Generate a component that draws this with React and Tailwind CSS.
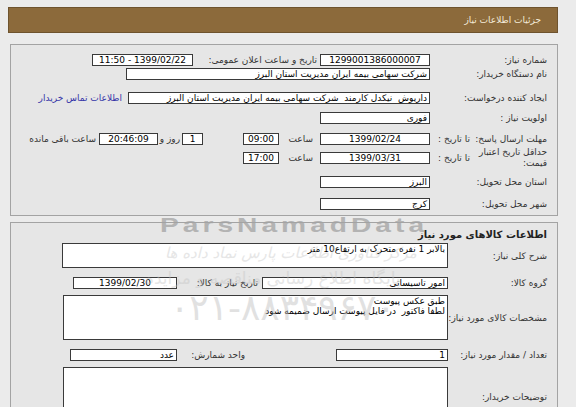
import React from "react";

const Field = ({ w, children, align = "center", className = "" }) => {
  const al = align === "center" ? "justify-center" : "justify-start";
  return (
    <div
      className={`h-[12px] shrink-0 bg-white border border-[#3a3a3a] flex items-center px-[2px] leading-[10px] text-black overflow-hidden whitespace-nowrap ${al} ${className}`}
      style={{ width: w }}
    >
      {children}
    </div>
  );
};

const Area = ({ w, h, children }) => (
  <div
    className="shrink-0 bg-white border border-[#3a3a3a] px-[2px] text-black leading-[10px] overflow-hidden"
    style={{ width: w, height: h }}
  >
    {children}
  </div>
);

export default function App() {
  return (
    <div
      dir="rtl"
      className="relative w-[576px] h-[407px] overflow-hidden bg-[#ebebeb] pt-[7px] text-[9px] leading-[12px] text-[#333]"
      style={{ fontFamily: '"DejaVu Sans", "Liberation Sans", sans-serif' }}
    >
      {/* header */}
      <div className="mr-[18px] ml-[8px] h-[26px] bg-[#8c6a3b] border border-[#6e532e] flex items-center pr-[16px] text-[#f3ead9]">
        جزئیات اطلاعات نیاز
      </div>

      {/* panel 1 */}
      <div className="mt-[11px] mr-[18px] ml-[10px] border border-[#a3a3a3] bg-[#e6e6e6] pt-[8px] pb-[4px] pr-[10px]">
        <div className="flex items-center h-[14px]">
          <div className="w-[117px] shrink-0">شماره نیاز:</div>
          <Field w={110}>1299001386000007</Field>
          <div className="w-[127px] shrink-0 pr-[3px]">تاریخ و ساعت اعلان عمومی:</div>
          <Field w={101}>1399/02/22 - 11:50</Field>
        </div>
        <div className="flex items-center h-[14px]">
          <div className="w-[117px] shrink-0">نام دستگاه خریدار:</div>
          <Field w={304} align="start">شرکت سهامی بیمه ایران مدیریت استان البرز</Field>
        </div>
        <div className="flex items-center h-[14px] mt-[10px]">
          <div className="w-[117px] shrink-0">ایجاد کننده درخواست:</div>
          <Field w={302} align="start">
            <span className="whitespace-pre">داریوش  نیکدل کارمند  شرکت سهامی بیمه ایران مدیریت استان البرز</span>
          </Field>
          <div className="mr-[6px] text-[#3535a8] whitespace-nowrap">اطلاعات تماس خریدار</div>
        </div>
        <div className="flex items-center h-[14px] mt-[6px]">
          <div className="w-[117px] shrink-0">اولویت نیاز :</div>
          <Field w={110} align="start">فوری</Field>
        </div>
        <div className="flex items-center h-[14px] mt-[7px]">
          <div className="w-[77px] shrink-0 whitespace-nowrap">مهلت ارسال پاسخ:</div>
          <div className="w-[40px] shrink-0 whitespace-nowrap">تا تاریخ :</div>
          <Field w={110}>1399/02/24</Field>
          <div className="w-[41px] shrink-0 pr-[7px]">ساعت</div>
          <Field w={36}>09:00</Field>
          <div className="w-[40px] shrink-0" />
          <Field w={21}>1</Field>
          <div className="w-[24px] shrink-0 pr-[2px] whitespace-nowrap">روز و</div>
          <Field w={59} className="bg-[#f1efc4] text-[#555]">20:46:09</Field>
          <div className="mr-[3px] whitespace-nowrap">ساعت باقی مانده</div>
        </div>
        <div className="flex items-center h-[24px]">
          <div className="w-[77px] shrink-0 leading-[11px]">حداقل تاریخ اعتبار قیمت:</div>
          <div className="w-[40px] shrink-0 whitespace-nowrap">تا تاریخ :</div>
          <Field w={110}>1399/03/31</Field>
          <div className="w-[41px] shrink-0 pr-[7px]">ساعت</div>
          <Field w={36}>17:00</Field>
        </div>
        <div className="flex items-center h-[14px] mt-[5px]">
          <div className="w-[117px] shrink-0">استان محل تحویل:</div>
          <Field w={110} align="start">البرز</Field>
        </div>
        <div className="flex items-center h-[14px] mt-[8px]">
          <div className="w-[117px] shrink-0">شهر محل تحویل:</div>
          <Field w={110} align="start">کرج</Field>
        </div>
      </div>

      {/* panel 2 */}
      <div className="mt-[6px] mr-[18px] ml-[10px] border border-[#a3a3a3] bg-[#e6e6e6] pt-[5px] pr-[10px] h-[200px]">
        <div className="h-[14px] flex items-center font-bold text-[10px] text-[#222]">
          اطلاعات کالاهای مورد نیاز
        </div>
        <div className="flex items-center mt-[1px]">
          <div className="w-[99px] shrink-0">شرح کلی نیاز:</div>
          <Area w={386} h={25}>بالابر 1 نفره متحرک به ارتفاع10 متر</Area>
        </div>
        <div className="flex items-center h-[14px] mt-[8px]">
          <div className="w-[99px] shrink-0">گروه کالا:</div>
          <Field w={186} align="start">امور تاسیساتی</Field>
          <div className="w-[85px] shrink-0 pr-[4px] whitespace-nowrap">تاریخ نیاز به کالا:</div>
          <Field w={104}>1399/02/30</Field>
        </div>
        <div className="flex items-center mt-[5px]">
          <div className="w-[99px] shrink-0 whitespace-nowrap">مشخصات کالای مورد نیاز:</div>
          <Area w={385} h={45}>
            <div>طبق عکس پیوست</div>
            <div className="whitespace-pre">لطفا فاکتور  در فایل پیوست ارسال ضمیمه شود</div>
          </Area>
        </div>
        <div className="flex items-center h-[14px] mt-[8px]">
          <div className="w-[99px] shrink-0 whitespace-nowrap">تعداد / مقدار مورد نیاز:</div>
          <Field w={112} align="start">1</Field>
          <div className="w-[159px] shrink-0 pr-[91px] whitespace-nowrap">واحد شمارش:</div>
          <Field w={107} align="start">عدد</Field>
        </div>
        <div className="flex items-center mt-[5px]">
          <div className="w-[99px] shrink-0">توضیحات خریدار:</div>
          <Area w={385} h={60} />
        </div>
      </div>

      {/* watermark */}
      <div
        className="pointer-events-none absolute left-[160px] top-[212px] text-[21px] leading-[26px] font-black tracking-[3px] text-[#a3a3a3] opacity-75 scale-x-[1.34] origin-left"
        style={{ fontFamily: '"Liberation Sans", sans-serif' }}
        dir="ltr"
      >
        ParsNamadData
      </div>
      <div className="pointer-events-none absolute left-[165px] top-[244px] text-[15px] leading-[18px] italic text-[#c2c2c2] opacity-40 whitespace-nowrap">
        مرکز فناوری اطلاعات پارس نماد داده ها
      </div>
      <div className="pointer-events-none absolute left-[145px] top-[268px] text-[17px] leading-[20px] text-[#c2c2c2] opacity-40 whitespace-nowrap">
        پایگاه اطلاع رسانی مناقصه و مزایده
      </div>
      <div
        className="pointer-events-none absolute left-[170px] top-[288px] text-[36px] leading-[40px] text-[#bdbdbd] opacity-45 whitespace-nowrap"
        dir="ltr"
      >
        ۰۲۱-۸۸۳۴۹۶۷۰
      </div>
    </div>
  );
}
